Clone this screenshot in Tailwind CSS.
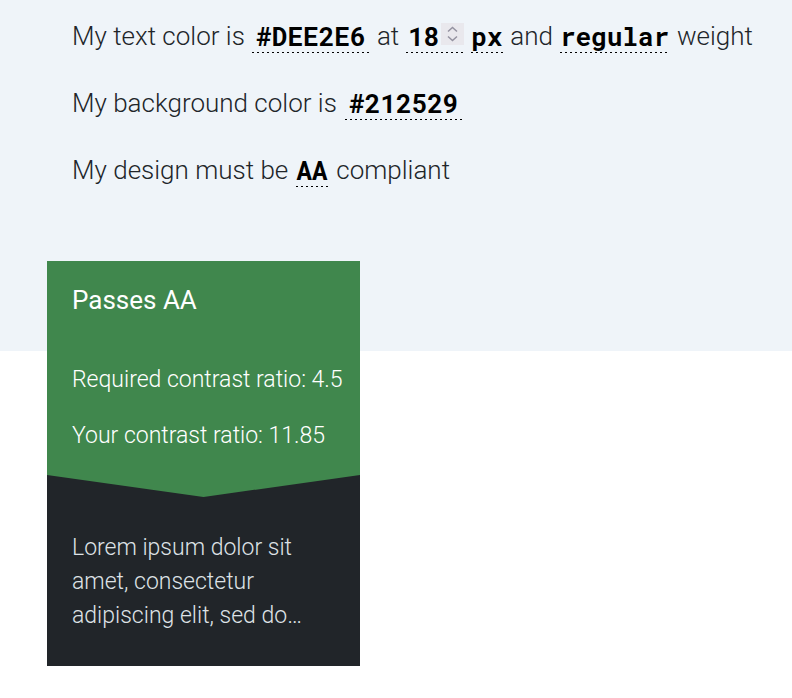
<!DOCTYPE html>
<html lang="en">
<head>
<meta charset="utf-8">
<meta name="viewport" content="width=device-width, initial-scale=1">
<title>Contrast checker</title>
<script src="https://cdn.jsdelivr.net/npm/@tailwindcss/browser@4"></script>
</head>
<body class="bg-white font-[Roboto,sans-serif] font-light text-[#212529]">
<form class="bg-[#eff4f9] pt-5 pb-[164px] px-[72px] text-[26px] leading-8">
  <div class="flex flex-col gap-[34px]">
    <div class="flex items-start gap-[7px] whitespace-nowrap">
      <label for="fg">My text color is</label>
      <input id="fg" type="text" value="#DEE2E6" class="w-[118px] h-[33px] pb-[2px] text-center font-['Roboto_Mono','Liberation_Mono',monospace] font-bold text-black bg-[repeating-linear-gradient(to_right,black_0_2px,transparent_2px_5px)] bg-[length:100%_1px] bg-bottom bg-no-repeat">
      <label for="size">at</label>
      <span class="flex w-[58px] h-[33px] pb-[2px] bg-[repeating-linear-gradient(to_right,black_0_2px,transparent_2px_5px)] bg-[length:100%_1px] bg-bottom bg-no-repeat">
        <input id="size" type="number" value="18" class="w-[35px] pl-[2px] appearance-none [&::-webkit-inner-spin-button]:appearance-none font-['Roboto_Mono','Liberation_Mono',monospace] font-bold text-black">
        <svg class="mt-[3px] w-[23px] h-[22px] bg-[#e9e8ed]" viewBox="0 0 23 22" fill="none" stroke="#9492a0" stroke-width="1.5" aria-hidden="true"><path d="M7 8.500L11.500 4.500L16 8.500M7 13.500L11.500 17.500L16 13.500"/></svg>
      </span>
      <select aria-label="Unit" class="appearance-none w-8 h-[33px] pb-[2px] font-['Roboto_Mono','Liberation_Mono',monospace] font-bold text-black bg-[repeating-linear-gradient(to_right,black_0_2px,transparent_2px_5px)] bg-[length:100%_1px] bg-bottom bg-no-repeat"><option>px</option></select>
      <label for="weight">and</label>
      <select id="weight" class="appearance-none w-[111px] h-[33px] pb-[2px] font-['Roboto_Mono','Liberation_Mono',monospace] font-bold text-black bg-[repeating-linear-gradient(to_right,black_0_2px,transparent_2px_5px)] bg-[length:100%_1px] bg-bottom bg-no-repeat"><option>regular</option></select>
      <span>weight</span>
    </div>
    <div class="flex items-start gap-2 whitespace-nowrap">
      <label for="bg">My background color is</label>
      <input id="bg" type="text" value="#212529" class="w-[118px] h-[33px] pb-[2px] text-center font-['Roboto_Mono','Liberation_Mono',monospace] font-bold text-black bg-[repeating-linear-gradient(to_right,black_0_2px,transparent_2px_5px)] bg-[length:100%_1px] bg-bottom bg-no-repeat">
    </div>
    <div class="flex items-start gap-2 whitespace-nowrap">
      <label for="level">My design must be</label>
      <select id="level" class="appearance-none w-8 h-[33px] pb-[2px] font-['Roboto_Mono','Liberation_Mono',monospace] font-bold text-black bg-[repeating-linear-gradient(to_right,black_0_2px,transparent_2px_5px)] bg-[length:100%_1px] bg-bottom bg-no-repeat"><option>AA</option></select>
      <span>compliant</span>
    </div>
  </div>
</form>
<section class="relative -mt-[90px] ml-[47px] w-[313px] bg-[#212529]">
  <div class="bg-[#40874d] px-[25px] pt-[22px] pb-[22px] text-white">
    <h2 class="text-[26px] leading-[34px] font-normal">Passes AA</h2>
    <p class="mt-[46px] text-[23px] leading-[34px] whitespace-nowrap">Required contrast ratio: 4.5</p>
    <p class="mt-[22px] text-[23px] leading-[34px] whitespace-nowrap">Your contrast ratio: 11.85</p>
  </div>
  <svg class="block w-full h-[22px]" viewBox="0 0 313 22" preserveAspectRatio="none" aria-hidden="true"><path d="M0 0H313L156.500 22Z" fill="#40874d"/></svg>
  <p class="px-[25px] pt-[34px] pb-[33px] text-[23px] leading-[34px] text-[#dee2e6]">Lorem ipsum dolor sit amet, consectetur adipiscing elit, sed do…</p>
</section>
</body>
</html>
